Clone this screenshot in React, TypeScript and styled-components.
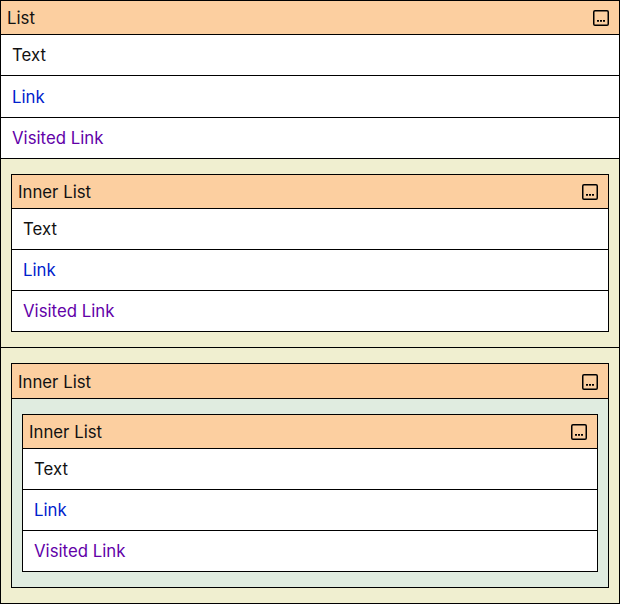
import React from "react";
import styled, { createGlobalStyle } from "styled-components";

const GlobalStyle = createGlobalStyle`
  *, *::before, *::after { box-sizing: border-box; }
  body { margin: 0; background: #fff; }
`;

const Page = styled.main`
  width: 620px;
  font: 400 16.8px/24px Inter, sans-serif;
  color: #111;
`;

const ListBox = styled.section`
  border: 1px solid #000;
  background: #fff;
`;

const Header = styled.header<{ $tall?: boolean }>`
  display: flex;
  align-items: center;
  justify-content: space-between;
  height: ${({ $tall }) => ($tall ? 34 : 33)}px;
  padding: ${({ $tall }) => ($tall ? "1px 10px 0 6px" : "0 10px 0 6px")};
  background: #fccfa0;
`;

const Row = styled.div<{ $height?: number }>`
  display: flex;
  align-items: center;
  height: ${({ $height = 41 }) => $height}px;
  padding-left: 11px;
  border-top: 1px solid #000;
`;

const Link = styled.a<{ $visited?: boolean }>`
  color: ${({ $visited }) => ($visited ? "#6200a8" : "#0022cc")};
  text-decoration: none;
`;

const Nest = styled.div<{ $tone: string }>`
  padding: 15px 10px;
  border-top: 1px solid #000;
  background: ${({ $tone }) => $tone};
`;

const Icon = styled.svg`
  display: block;
  width: 16px;
  height: 16px;
`;

function MoreIcon() {
  return (
    <Icon viewBox="0 0 16 16" aria-hidden="true">
      <rect x="0.75" y="0.75" width="14.5" height="14.5" rx="1.25" fill="none" stroke="#000" strokeWidth="1.5" />
      <path d="M4 10.1h2v1.7H4zM7 10.1h2v1.7H7zM10 10.1h2v1.7h-2z" />
    </Icon>
  );
}

function ListHeader({ title, tall }: { title: string; tall?: boolean }) {
  return (
    <Header $tall={tall}>
      <span>{title}</span>
      <MoreIcon />
    </Header>
  );
}

function Items({ linkHeight }: { linkHeight?: number }) {
  return (
    <>
      <Row>Text</Row>
      <Row $height={linkHeight}><Link>Link</Link></Row>
      <Row><Link $visited>Visited Link</Link></Row>
    </>
  );
}

export default function App() {
  return (
    <Page>
      <GlobalStyle />
      <ListBox>
        <ListHeader title="List" />
        <Items linkHeight={42} />
        <Nest $tone="#f0efd0">
          <ListBox>
            <ListHeader title="Inner List" />
            <Items />
          </ListBox>
        </Nest>
        <Nest $tone="#f0efd0">
          <ListBox>
            <ListHeader title="Inner List" tall />
            <Nest $tone="#e0ece0">
              <ListBox>
                <ListHeader title="Inner List" />
                <Items />
              </ListBox>
            </Nest>
          </ListBox>
        </Nest>
      </ListBox>
    </Page>
  );
}
